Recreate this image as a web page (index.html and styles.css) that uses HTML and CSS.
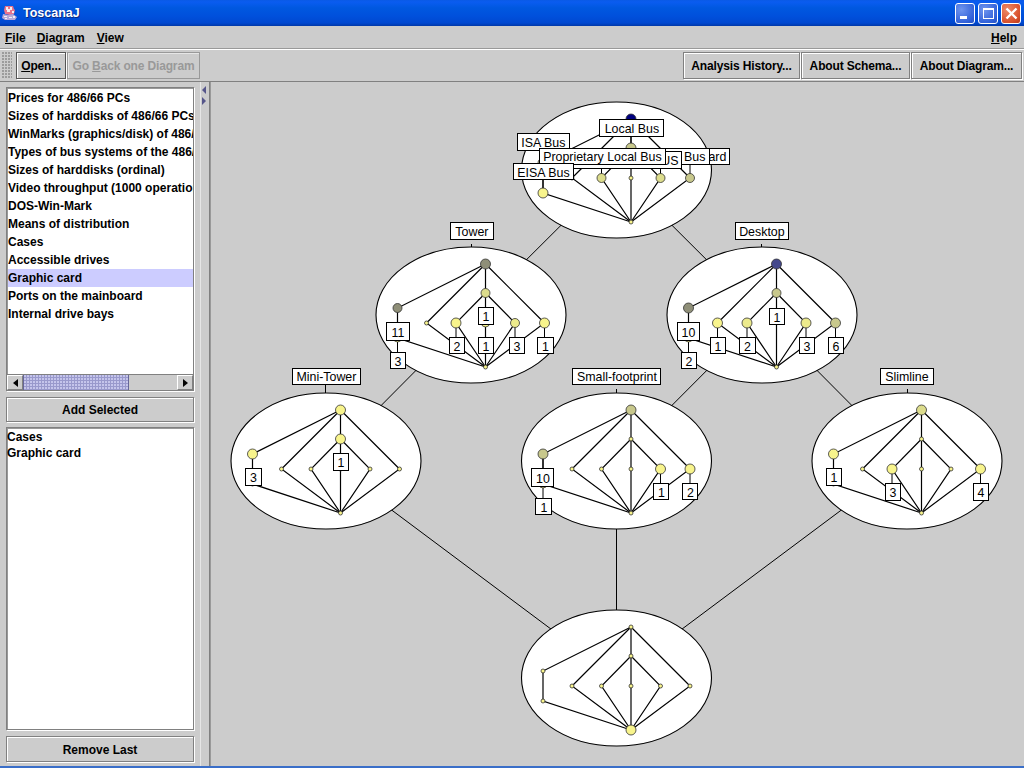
FILE: index.html
```html
<!DOCTYPE html>
<html lang="en">
<head>
<meta charset="utf-8">
<title>ToscanaJ</title>
<link rel="stylesheet" href="styles.css">
</head>
<body>
<div class="window">
  <header class="titlebar">
    <svg class="app-icon" width="16" height="16" viewBox="0 0 16 16">
      <path class="i-pink" d="M3 1h8l1 3 1 1-1 4-4 1-5-1-1-4z"/>
      <path class="i-white" d="M4 2h2v2h2V2h2v3H8v2H5V5H4zM10 6h2v2h-2z"/>
      <path class="i-blue" d="M1 9l5 1 5-1 4 3-2 3H3l-3-2z"/>
      <path class="i-white" d="M2 11h3v1H2zM7 12h3v1H7zM3 13h2v1H3zM11 11h2v2h-2z"/>
    </svg>
    <span class="title-text">ToscanaJ</span>
    <div class="win-buttons">
      <span class="win-btn blue"><i class="min-glyph"></i></span>
      <span class="win-btn blue"><i class="max-glyph"></i></span>
      <span class="win-btn red">
        <svg width="13" height="13" viewBox="0 0 13 13"><path class="close-x" d="M1.5 1.5l10 10M11.5 1.5l-10 10"/></svg>
      </span>
    </div>
  </header>

  <nav class="menubar">
    <span class="menu"><u>F</u>ile</span>
    <span class="menu"><u>D</u>iagram</span>
    <span class="menu menu-view"><u>V</u>iew</span>
    <span class="menu menu-help"><u>H</u>elp</span>
  </nav>

  <div class="toolbar">
    <span class="grip"></span>
    <button class="btn btn-open"><u>O</u>pen...</button>
    <button class="btn btn-back" disabled>Go <u>B</u>ack one Diagram</button>
    <span class="tool-spacer"></span>
    <button class="btn btn-analysis">Analysis History...</button>
    <button class="btn btn-schema">About Schema...</button>
    <button class="btn btn-diagram">About Diagram...</button>
  </div>

  <main class="main">
    <aside class="sidebar">
      <div class="list-box top-list">
        <ul class="list">
          <li>Prices for 486/66 PCs</li>
          <li>Sizes of harddisks of 486/66 PCs</li>
          <li>WinMarks (graphics/disk) of 486/66 PCs</li>
          <li>Types of bus systems of the 486/66 PCs</li>
          <li>Sizes of harddisks (ordinal)</li>
          <li>Video throughput (1000 operations/sec)</li>
          <li>DOS-Win-Mark</li>
          <li>Means of distribution</li>
          <li>Cases</li>
          <li>Accessible drives</li>
          <li class="selected">Graphic card</li>
          <li>Ports on the mainboard</li>
          <li>Internal drive bays</li>
        </ul>
        <div class="hscroll">
          <span class="sb-btn"><i class="arrow-left"></i></span>
          <span class="sb-thumb"></span>
          <span class="sb-track"></span>
          <span class="sb-btn"><i class="arrow-right"></i></span>
        </div>
      </div>
      <button class="btn btn-wide">Add Selected</button>
      <div class="list-box bottom-list">
        <ul class="list list-plain">
          <li>Cases</li>
          <li>Graphic card</li>
        </ul>
      </div>
      <button class="btn btn-wide">Remove Last</button>
    </aside>

    <div class="divider">
      <i class="div-left"></i>
      <i class="div-right"></i>
    </div>

    <section class="canvas">
      <svg class="diagram" width="813" height="684" viewBox="209 82 813 684">
        <defs>
          <g id="lattice" class="edges">
            <path d="M14.5 -51L-73.5 -7V23L14.5 52"/>
            <path d="M14.5 -51L-44.5 8L14.5 52"/>
            <path d="M14.5 -51V52"/>
            <path d="M14.5 -51L73.5 8L14.5 52"/>
            <path d="M14.5 -22L-15 8L14.5 52"/>
            <path d="M14.5 -22L44 8L14.5 52"/>
          </g>
          <g id="small-row" class="y">
            <circle cx="-73.5" cy="23" r="2"/>
            <circle cx="-44.5" cy="8" r="2"/>
            <circle cx="14.5" cy="8" r="2"/>
            <circle cx="14.5" cy="52" r="2"/>
          </g>
        </defs>

        <g class="links">
          <path d="M616.5 170L471 315M616.5 170L762 315"/>
          <path d="M471 315L326 461M762 315L616.5 461M762 315L907 461"/>
          <path d="M326 461L616.5 678M616.5 461V678M907 461L616.5 678"/>
        </g>

        <g class="ticks">
          <path d="M471.5 244V248M761.5 244V248M325.5 385V394M616.5 389V394M907.5 389V394"/>
        </g>

        <g transform="translate(616.5 170)">
          <ellipse class="oval" rx="95" ry="68"/>
          <use href="#lattice"/>
          <path class="stem" d="M-73.5 23V5M-15 8V-6M44 8V-6M73.5 8V-6M14.5 -22V-34"/>
          <circle class="navy" cx="14.5" cy="-51" r="5"/>
          <circle class="k" cx="14.5" cy="-22" r="5"/>
          <circle class="k" cx="-73.5" cy="-7" r="5"/>
          <circle class="y" cx="-73.5" cy="23" r="5"/>
          <circle class="y" cx="-44.5" cy="8" r="2"/>
          <circle class="k2" cx="-15" cy="8" r="4.5"/>
          <circle class="y" cx="14.5" cy="8" r="2"/>
          <circle class="k2" cx="44" cy="8" r="4.5"/>
          <circle class="k" cx="73.5" cy="8" r="4.5"/>
          <circle class="y" cx="14.5" cy="52" r="2"/>
          <rect class="box" x="63.5" y="-22" width="49" height="16"/>
          <text class="lbl" x="109.5" y="-9.5" text-anchor="end">On-board</text>
          <rect class="box" x="0" y="-22" width="92.5" height="16"/>
          <text class="lbl" x="88.5" y="-9.5" text-anchor="end">PCI Bus</text>
          <rect class="box" x="-61.5" y="-19" width="126" height="17"/>
          <text class="lbl" x="61.5" y="-6" text-anchor="end">VESA Local BUS</text>
          <rect class="box" x="-99.5" y="-37" width="52" height="17"/>
          <text class="lbl" x="-73.5" y="-24" text-anchor="middle">ISA Bus</text>
          <rect class="box" x="-17.5" y="-51" width="64" height="17"/>
          <text class="lbl" x="15" y="-38" text-anchor="middle">Local Bus</text>
          <rect class="box" x="-77.5" y="-22" width="126" height="16"/>
          <text class="lbl" x="-14.5" y="-9.5" text-anchor="middle">Proprietary Local Bus</text>
          <rect class="box" x="-103.5" y="-7" width="60" height="16"/>
          <text class="lbl" x="-73.5" y="6" text-anchor="middle">EISA Bus</text>
        </g>

        <g transform="translate(471 315)">
          <ellipse class="oval" rx="95" ry="68"/>
          <use href="#lattice"/>
          <path class="stem" d="M-73.5 -7V7M-73.5 23V37M-15 8V22M14.5 8V22M44 8V22M73.5 8V22"/>
          <circle class="g" cx="14.5" cy="-51" r="5"/>
          <circle class="k2" cx="14.5" cy="-22" r="4.5"/>
          <circle class="g" cx="-73.5" cy="-7" r="4.5"/>
          <circle class="y" cx="-73.5" cy="23" r="4"/>
          <circle class="y" cx="-44.5" cy="8" r="2"/>
          <circle class="y" cx="-15" cy="8" r="5"/>
          <circle class="y" cx="14.5" cy="8" r="4"/>
          <circle class="y2" cx="44" cy="8" r="4.5"/>
          <circle class="y" cx="73.5" cy="8" r="5"/>
          <circle class="y" cx="14.5" cy="52" r="2"/>
          <rect class="box" x="-85" y="7" width="23" height="18"/>
          <text class="lbl" x="-73.5" y="21" text-anchor="middle">11</text>
          <rect class="box" x="-81" y="37" width="15" height="16"/>
          <text class="lbl" x="-73.5" y="50" text-anchor="middle">3</text>
          <rect class="box" x="-22" y="22" width="15" height="16"/>
          <text class="lbl" x="-14.5" y="35" text-anchor="middle">2</text>
          <rect class="box" x="7" y="22" width="15" height="16"/>
          <text class="lbl" x="14.5" y="35" text-anchor="middle">1</text>
          <rect class="box" x="38" y="22" width="15" height="16"/>
          <text class="lbl" x="45.5" y="35" text-anchor="middle">3</text>
          <rect class="box" x="66" y="22" width="16" height="16"/>
          <text class="lbl" x="74" y="35" text-anchor="middle">1</text>
          <rect class="box" x="7" y="-8" width="15" height="17"/>
          <text class="lbl" x="14.5" y="5" text-anchor="middle">1</text>
          <rect class="box" x="-21" y="-93" width="43" height="17"/>
          <text class="lbl" x="0.5" y="-80" text-anchor="middle">Tower</text>
        </g>

        <g transform="translate(762 315)">
          <ellipse class="oval" rx="95" ry="68"/>
          <use href="#lattice"/>
          <path class="stem" d="M-73.5 -7V7M-73.5 23V37M-44.5 8V22M-15 8V22M44 8V22M73.5 8V22"/>
          <circle class="blue" cx="14.5" cy="-51" r="5"/>
          <circle class="k" cx="14.5" cy="-22" r="4.5"/>
          <circle class="g" cx="-73.5" cy="-7" r="5"/>
          <circle class="y" cx="-73.5" cy="23" r="4"/>
          <circle class="y" cx="-44.5" cy="8" r="5"/>
          <circle class="y2" cx="-15" cy="8" r="5"/>
          <circle class="y2" cx="44" cy="8" r="5"/>
          <circle class="k" cx="73.5" cy="8" r="5"/>
          <circle class="y" cx="14.5" cy="52" r="2"/>
          <rect class="box" x="-85" y="7" width="22" height="18"/>
          <text class="lbl" x="-74" y="21" text-anchor="middle">10</text>
          <rect class="box" x="-81" y="37" width="15" height="16"/>
          <text class="lbl" x="-73.5" y="50" text-anchor="middle">2</text>
          <rect class="box" x="-52" y="22" width="15" height="16"/>
          <text class="lbl" x="-44.5" y="35" text-anchor="middle">1</text>
          <rect class="box" x="-23" y="22" width="16" height="16"/>
          <text class="lbl" x="-15" y="35" text-anchor="middle">2</text>
          <rect class="box" x="7" y="-7" width="15" height="16"/>
          <text class="lbl" x="14.5" y="6" text-anchor="middle">1</text>
          <rect class="box" x="37" y="22" width="15" height="16"/>
          <text class="lbl" x="44.5" y="35" text-anchor="middle">3</text>
          <rect class="box" x="66" y="22" width="15" height="16"/>
          <text class="lbl" x="73.5" y="35" text-anchor="middle">6</text>
          <rect class="box" x="-27" y="-93" width="53" height="17"/>
          <text class="lbl" x="-0.5" y="-80" text-anchor="middle">Desktop</text>
        </g>

        <g transform="translate(326 461)">
          <ellipse class="oval" rx="95" ry="68"/>
          <use href="#lattice"/>
          <path class="stem" d="M-73.5 -7V7"/>
          <circle class="y" cx="14.5" cy="-51" r="5"/>
          <circle class="y" cx="14.5" cy="-22" r="5"/>
          <circle class="y" cx="-73.5" cy="-7" r="5"/>
          <use href="#small-row"/>
          <circle class="y" cx="-15" cy="8" r="2"/>
          <circle class="y" cx="44" cy="8" r="2"/>
          <circle class="y" cx="73.5" cy="8" r="2"/>
          <rect class="box" x="-81" y="7" width="16" height="17"/>
          <text class="lbl" x="-73" y="20" text-anchor="middle">3</text>
          <rect class="box" x="7" y="-8" width="15" height="17"/>
          <text class="lbl" x="14.5" y="5" text-anchor="middle">1</text>
          <rect class="box" x="-34" y="-93" width="68" height="16"/>
          <text class="lbl" x="0" y="-80.5" text-anchor="middle">Mini-Tower</text>
        </g>

        <g transform="translate(616.5 461)">
          <ellipse class="oval" rx="95" ry="68"/>
          <use href="#lattice"/>
          <path class="stem" d="M-73.5 -7V7M-73.5 23V37M44 8V22M73.5 8V22"/>
          <circle class="k" cx="14.5" cy="-51" r="5"/>
          <circle class="y" cx="14.5" cy="-22" r="2"/>
          <circle class="k" cx="-73.5" cy="-7" r="5"/>
          <circle class="y" cx="-73.5" cy="23" r="4"/>
          <circle class="y" cx="-44.5" cy="8" r="2"/>
          <circle class="y" cx="-15" cy="8" r="2"/>
          <circle class="y" cx="14.5" cy="8" r="2"/>
          <circle class="y" cx="44" cy="8" r="5"/>
          <circle class="y" cx="73.5" cy="8" r="5"/>
          <circle class="y" cx="14.5" cy="52" r="2"/>
          <rect class="box" x="-85" y="7" width="22" height="18"/>
          <text class="lbl" x="-74" y="21" text-anchor="middle">10</text>
          <rect class="box" x="-81" y="37" width="16" height="16"/>
          <text class="lbl" x="-73" y="50" text-anchor="middle">1</text>
          <rect class="box" x="37" y="22" width="15" height="16"/>
          <text class="lbl" x="44.5" y="35" text-anchor="middle">1</text>
          <rect class="box" x="66" y="22" width="15" height="16"/>
          <text class="lbl" x="73.5" y="35" text-anchor="middle">2</text>
          <rect class="box" x="-44.5" y="-93" width="88" height="16"/>
          <text class="lbl" x="0" y="-80.5" text-anchor="middle">Small-footprint</text>
        </g>

        <g transform="translate(907 461)">
          <ellipse class="oval" rx="95" ry="68"/>
          <use href="#lattice"/>
          <path class="stem" d="M-73.5 -7V7M-15 8V22M73.5 8V22"/>
          <circle class="k2" cx="14.5" cy="-51" r="5"/>
          <circle class="y" cx="14.5" cy="-22" r="2"/>
          <circle class="y" cx="-73.5" cy="-7" r="5"/>
          <use href="#small-row"/>
          <circle class="y" cx="-15" cy="8" r="5"/>
          <circle class="y" cx="44" cy="8" r="2"/>
          <circle class="y" cx="73.5" cy="8" r="5"/>
          <rect class="box" x="-81" y="7" width="15" height="17"/>
          <text class="lbl" x="-73.5" y="20" text-anchor="middle">1</text>
          <rect class="box" x="-22" y="22" width="15" height="17"/>
          <text class="lbl" x="-14.5" y="35" text-anchor="middle">3</text>
          <rect class="box" x="66" y="22" width="15" height="17"/>
          <text class="lbl" x="73.5" y="35" text-anchor="middle">4</text>
          <rect class="box" x="-27" y="-93" width="53" height="16"/>
          <text class="lbl" x="-0.5" y="-80.5" text-anchor="middle">Slimline</text>
        </g>

        <g transform="translate(616.5 678)">
          <ellipse class="oval" rx="95" ry="68"/>
          <use href="#lattice"/>
          <circle class="y" cx="14.5" cy="-51" r="2"/>
          <circle class="y" cx="14.5" cy="-22" r="2"/>
          <circle class="y" cx="-73.5" cy="-7" r="2"/>
          <circle class="y" cx="-73.5" cy="23" r="2"/>
          <circle class="y" cx="-44.5" cy="8" r="2"/>
          <circle class="y" cx="-15" cy="8" r="2"/>
          <circle class="y" cx="14.5" cy="8" r="2"/>
          <circle class="y" cx="44" cy="8" r="2"/>
          <circle class="y" cx="73.5" cy="8" r="2"/>
          <circle class="y" cx="14.5" cy="52" r="5"/>
        </g>
      </svg>
    </section>
  </main>
  <div class="frame-bottom"></div>
</div>
</body>
</html>
```
FILE: styles.css
```css
* { box-sizing: border-box; }
html, body { margin: 0; padding: 0; }
body {
  width: 1024px;
  height: 768px;
  overflow: hidden;
  background: #cccccc;
  font: bold 12px "Liberation Sans", Arial, sans-serif;
  color: #000;
}
.window { width: 1024px; height: 768px; display: flex; flex-direction: column; opacity: 0.999; }

/* Title bar */
.titlebar {
  height: 26px;
  flex: none;
  display: flex;
  align-items: center;
  padding: 0 3px 0 2px;
  background: linear-gradient(#0a5ae6 0, #0a5cf0 2px, #0058e0 8px, #0050dc 16px, #0048d0 23px, #0038a8 26px);
}
.app-icon { flex: none; margin-right: 5px; }
.i-pink { fill: #e8738c; }
.i-white { fill: #f4eef2; }
.i-blue { fill: #b6a8d8; }
.title-text {
  color: #fff;
  font: bold 12.5px "Liberation Sans", Arial, sans-serif;
  text-shadow: 1px 1px 0 #0a2a80;
}
.win-buttons { margin-left: auto; display: flex; gap: 3px; }
.win-btn {
  width: 20px;
  height: 21px;
  border: 1px solid #fff;
  border-radius: 3px;
  display: flex;
  align-items: center;
  justify-content: center;
  position: relative;
}
.win-btn.blue { background: radial-gradient(circle at 30% 30%, #6f95ee, #2f5fd8 75%, #2450c0); }
.win-btn.red { background: radial-gradient(circle at 30% 30%, #ec8a68, #d8502c 70%, #b83a1c); }
.min-glyph { width: 7px; height: 3px; background: #fff; margin: 9px 4px 0 0; }
.max-glyph { width: 11px; height: 11px; border: 1px solid #fff; border-top-width: 2px; }
.close-x { stroke: #fff; stroke-width: 2.4; fill: none; }

/* Menu bar */
.menubar {
  height: 23px;
  flex: none;
  display: flex;
  align-items: center;
  padding: 2px 7px 0 5px;
  gap: 11px;
  background: #cccccc;
  border-bottom: 1px solid #999999;
}
.menu-view { margin-left: 1px; }
.menu-help { margin-left: auto; }
u { text-underline-offset: 1px; }

/* Tool bar */
.toolbar {
  height: 33px;
  flex: none;
  display: flex;
  align-items: flex-start;
  padding: 2px 2px 0 2px;
  gap: 1px;
  border-top: 1px solid #fff;
  border-bottom: 1px solid #808080;
}
.grip {
  width: 10px;
  height: 26px;
  margin-right: 3px;
  background-color: #ccc;
  background-image: radial-gradient(circle at 1px 1px, #999 0.7px, transparent 0.8px);
  background-size: 3px 3px;
}
.tool-spacer { flex: 1; }
.btn {
  height: 27px;
  padding: 0;
  font: bold 12px "Liberation Sans", Arial, sans-serif;
  color: #000;
  background: #cccccc;
  border: 1px solid #808080;
  box-shadow: inset 1px 1px 0 #fff, 1px 1px 0 #fff;
  text-align: center;
}
.toolbar .btn { letter-spacing: -0.15px; }
.btn:disabled { color: #999999; border-color: #999999; box-shadow: inset 1px 1px 0 #e6e6e6; }
.btn-open { width: 50px; border-color: #555; }
.btn-back { width: 133px; }
.btn-analysis { width: 117px; }
.btn-schema { width: 109px; }
.btn-diagram { width: 111px; }

/* Main */
.main { flex: 1; min-height: 0; display: flex; }
.sidebar {
  width: 200px;
  flex: none;
  display: flex;
  flex-direction: column;
  padding: 5px 6px 4px 6px;
}
.list-box {
  border: 1px solid #808080;
  box-shadow: inset 1px 1px 0 #999, 1px 1px 0 #fff;
  background: #fff;
  display: flex;
  flex-direction: column;
  overflow: hidden;
}
.top-list { height: 304px; flex: none; }
.bottom-list { height: 303px; flex: none; margin-top: 5px; }
.list {
  list-style: none;
  margin: 0;
  padding: 1px 0 0 1px;
  flex: 1;
  min-height: 0;
  overflow: hidden;
}
.list li {
  height: 18px;
  line-height: 18px;
  white-space: nowrap;
  overflow: hidden;
  padding-left: 0;
}
.list .selected { background: #ccccff; }
.list-plain { padding: 1px 0 0 0; }
.list-plain li { height: 16px; line-height: 16px; }
.hscroll {
  height: 16px;
  flex: none;
  display: flex;
  background: #cccccc;
  border-top: 1px solid #808080;
}
.sb-btn {
  width: 16px;
  flex: none;
  display: flex;
  align-items: center;
  justify-content: center;
  border: 1px solid #808080;
  border-top-color: #fff;
  border-left-color: #fff;
}
.arrow-left, .arrow-right { width: 0; height: 0; border-top: 4px solid transparent; border-bottom: 4px solid transparent; }
.arrow-left { border-right: 5px solid #000; }
.arrow-right { border-left: 5px solid #000; }
.sb-thumb {
  width: 106px;
  flex: none;
  background-color: #9999cc;
  background-image: radial-gradient(circle at 1px 1px, #c8c8ee 0.7px, transparent 0.8px);
  background-size: 3px 3px;
  border-left: 1px solid #666699;
  border-right: 1px solid #666699;
}
.sb-track { flex: 1; }
.btn-wide { width: 188px; height: 25px; margin-top: 6px; flex: none; }
.top-list + .btn-wide { margin-top: 6px; }
.bottom-list + .btn-wide { height: 26px; padding-top: 1px; }

/* Split divider */
.divider {
  width: 9px;
  flex: none;
  position: relative;
  border-left: 1px solid #e6e6e6;
  background-color: #ccc;
  background-image: radial-gradient(circle at 4px 1px, #909090 0.7px, transparent 0.8px);
  background-size: 3px 3px;
}
.div-left, .div-right {
  position: absolute;
  left: 1px;
  width: 0;
  height: 0;
  border-top: 4px solid transparent;
  border-bottom: 4px solid transparent;
}
.div-left { top: 4px; border-right: 4px solid #55558a; }
.div-right { top: 15px; border-left: 4px solid #55558a; }

/* Diagram */
.canvas {
  flex: 1;
  min-width: 0;
  background: #cccccc;
  border-left: 1px solid #808080;
  box-shadow: inset 1px 0 0 #999;
  overflow: hidden;
}
.diagram { display: block; margin-left: -1px; }
.links path, .ticks path, .stem { fill: none; stroke: #000; stroke-width: 1; }
.edges path { fill: none; stroke: #000; stroke-width: 1.2; }
.oval { fill: #fff; stroke: #000; stroke-width: 1.1; }
circle { stroke: #333; stroke-width: 0.8; }
.y { fill: #f8f48c; }
.y2 { fill: #ecea8c; }
.k { fill: #c8c88c; }
.k2 { fill: #dcdc8c; }
.g { fill: #8f8f78; }
.navy { fill: #000080; }
.blue { fill: #44488c; }
.box { fill: #fff; stroke: #000; stroke-width: 1; shape-rendering: crispEdges; }
.lbl {
  font: 12.4px "Liberation Sans", Arial, sans-serif;
  fill: #000;
  stroke: none;
  transform: translate(0.4px, 0.7px);
}

.frame-bottom { height: 2px; flex: none; background: #3a6ec8; }
```
